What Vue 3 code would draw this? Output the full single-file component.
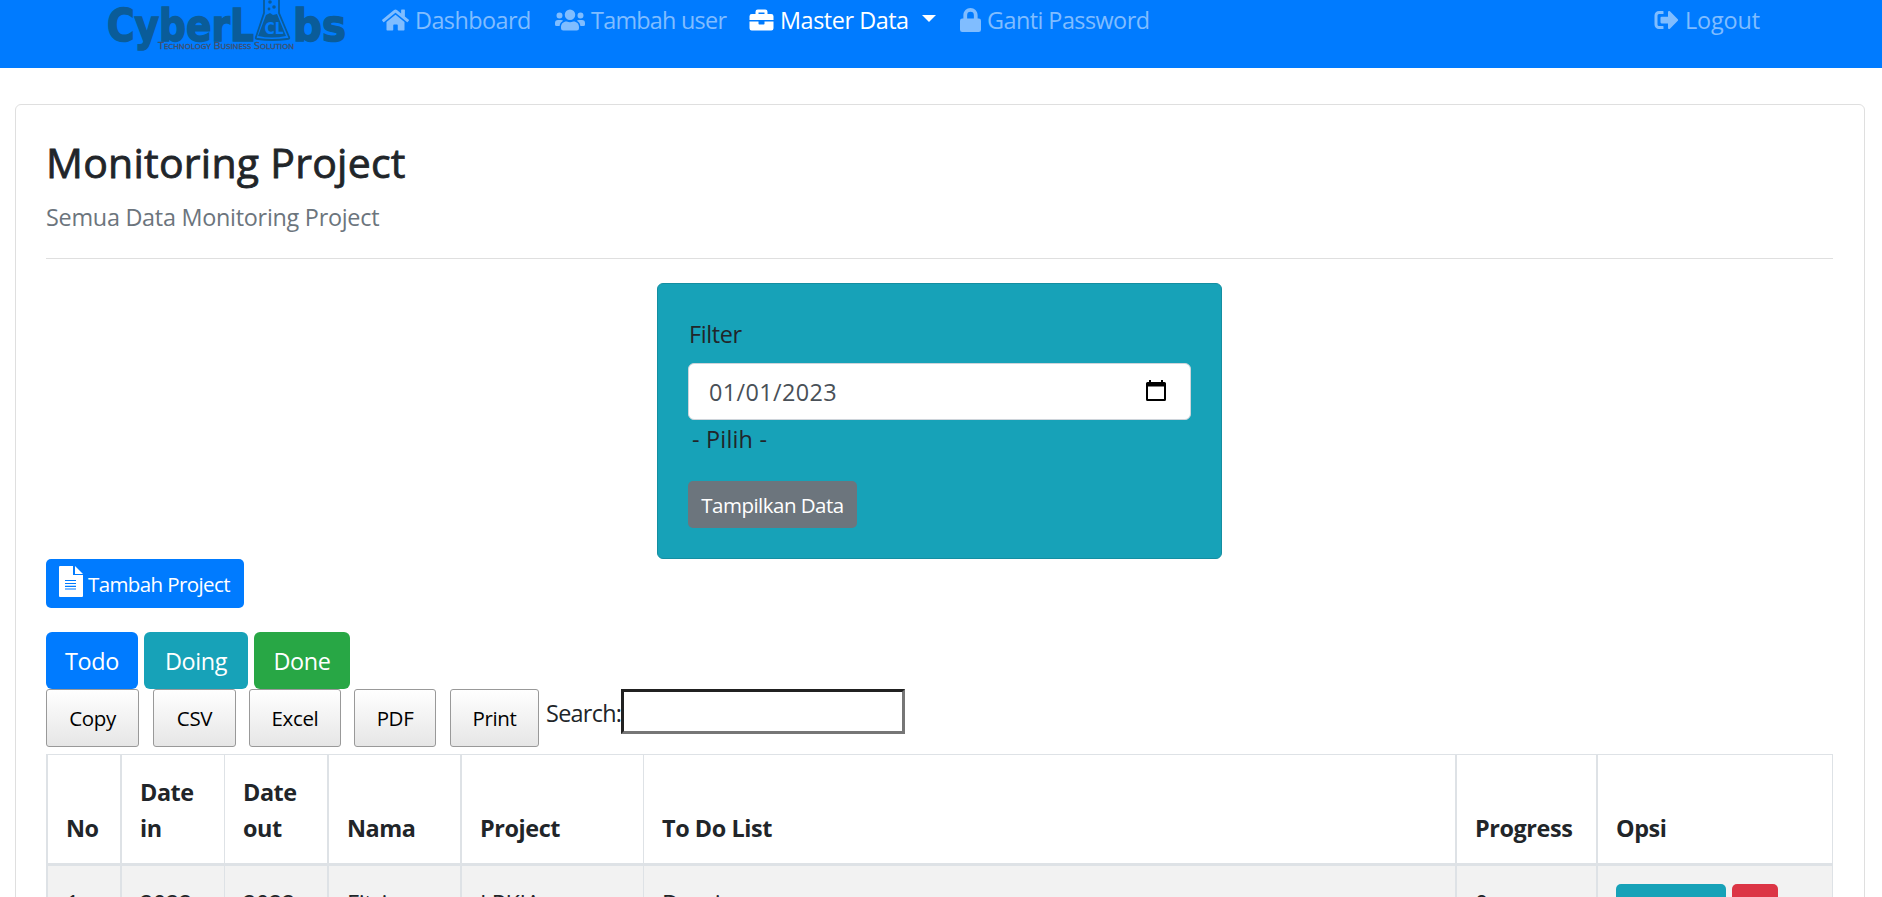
<script setup>
import { ref } from 'vue'

const filterDate = ref('01/01/2023')
const search = ref('')

const exportsList = [
  { label: 'Copy', key: 'copy' },
  { label: 'CSV', key: 'csv' },
  { label: 'Excel', key: 'excel' },
  { label: 'PDF', key: 'pdf' },
  { label: 'Print', key: 'print' },
]

const rows = [
  { no: 1, dateIn: '2022-', dateOut: '2022-', nama: 'Fitri', project: 'LPKIA', todo: 'Desain', progress: '0' },
]
</script>

<template>
  <div class="page">
    <nav class="navbar">
      <a class="brand" aria-label="CyberLabs">
        <svg width="244" height="52" viewBox="0 0 244 52">
          <g class="logo-text">
            <text x="1" y="40.500" textLength="147" lengthAdjust="spacingAndGlyphs">CyberL</text>
            <text x="187" y="40.500" textLength="53" lengthAdjust="spacingAndGlyphs">bs</text>
          </g>
          <path d="M158-2v15L150 37q-1 2 2 2 14 2 29 0 3 0 2-2L173 13V-2" fill="none" stroke="#0a5c99" stroke-width="1.8" />
          <path d="M160 15l4-2 3 2 4-1 9 22q-14 3-28 0z" fill="#0a5c99" />
          <circle cx="163" cy="9" r="1.4" fill="#0a5c99" />
          <circle cx="168" cy="7" r="1.8" fill="#0a5c99" />
          <circle cx="164" cy="2" r="1.8" fill="#0a5c99" />
          <text class="logo-cl" x="158.500" y="33.500" textLength="19" lengthAdjust="spacingAndGlyphs">CL</text>
          <text class="logo-tag" x="52" y="49" textLength="136" lengthAdjust="spacingAndGlyphs">Technology Business Solution</text>
        </svg>
      </a>
      <a class="nav-link dash">
        <svg width="27" height="24" viewBox="0 0 576 512"><path d="M280 148L96 300v164a16 16 0 0 0 16 16h112a16 16 0 0 0 16-16v-96a16 16 0 0 1 16-16h64a16 16 0 0 1 16 16v96a16 16 0 0 0 16 16h112a16 16 0 0 0 16-16V300L296 148a12 12 0 0 0-16 0zM572 251l-84-69V44a12 12 0 0 0-12-12h-56a12 12 0 0 0-12 12v72L318 43a48 48 0 0 0-61 0L4 251a12 12 0 0 0-1 17l25 31a12 12 0 0 0 17 2L280 107a12 12 0 0 1 16 0l235 194a12 12 0 0 0 17-2l26-31a12 12 0 0 0-2-17z" /></svg>
        <span>Dashboard</span>
      </a>
      <a class="nav-link users">
        <svg width="30" height="24" viewBox="0 0 640 512"><path d="M96 224a64 64 0 1 0 0-128 64 64 0 0 0 0 128zm448 0a64 64 0 1 0 0-128 64 64 0 0 0 0 128zm32 32h-64c-18 0-34 7-45 18 40 22 69 62 75 110h66a32 32 0 0 0 32-32v-32a64 64 0 0 0-64-64zm-256 0a112 112 0 1 0 0-224 112 112 0 0 0 0 224zm77 32h-8a155 155 0 0 1-138 0h-8c-64 0-115 51-115 115v29a48 48 0 0 0 48 48h288a48 48 0 0 0 48-48v-29c0-64-51-115-115-115zm-224-14a64 64 0 0 0-45-18H64a64 64 0 0 0-64 64v32a32 32 0 0 0 32 32h66c6-48 35-88 75-110z" /></svg>
        <span>Tambah user</span>
      </a>
      <a class="nav-link master">
        <svg width="25" height="24" viewBox="0 0 512 512"><path d="M320 336a16 16 0 0 1-16 16h-96a16 16 0 0 1-16-16v-48H0v144a48 48 0 0 0 48 48h416a48 48 0 0 0 48-48V288H320zm144-208h-80V80a48 48 0 0 0-48-48H176a48 48 0 0 0-48 48v48H48a48 48 0 0 0-48 48v80h512v-80a48 48 0 0 0-48-48zm-144 0H192V96h128z" /></svg>
        <span>Master Data</span>
        <i class="caret"></i>
      </a>
      <a class="nav-link lock">
        <svg width="21" height="24" viewBox="0 0 448 512"><path d="M400 224h-24v-72C376 68 308 0 224 0S72 68 72 152v72H48a48 48 0 0 0-48 48v192a48 48 0 0 0 48 48h352a48 48 0 0 0 48-48V272a48 48 0 0 0-48-48zm-104 0H152v-72a72 72 0 0 1 144 0z" /></svg>
        <span>Ganti Password</span>
      </a>
      <a class="nav-link logout">
        <svg width="25" height="24" viewBox="0 0 512 512"><path d="M497 273L329 441c-15 15-41 4-41-17v-96H152a24 24 0 0 1-24-24v-96a24 24 0 0 1 24-24h136V88c0-21 26-32 41-17l168 168a24 24 0 0 1 0 34zM192 436v-40a12 12 0 0 0-12-12H96a32 32 0 0 1-32-32V160a32 32 0 0 1 32-32h84a12 12 0 0 0 12-12V76a12 12 0 0 0-12-12H96a96 96 0 0 0-96 96v192a96 96 0 0 0 96 96h84a12 12 0 0 0 12-12z" /></svg>
        <span>Logout</span>
      </a>
    </nav>

    <main class="card">
      <h1>Monitoring Project</h1>
      <p class="subtitle">Semua Data Monitoring Project</p>
      <hr />

      <section class="filter">
        <label>Filter</label>
        <div class="date-field">
          <span>{{ filterDate }}</span>
          <svg width="20" height="21" viewBox="0 0 20 21"><path d="M3 0h2v2h10V0h2v2h1.500q1.500 0 1.500 1.500v16q0 1.500-1.500 1.500h-17Q0 21 0 19.500v-16Q0 2 1.500 2H3zM2 6.500V19h16V6.500z" fill="#000" fill-rule="evenodd" /></svg>
        </div>
        <div class="pilih">- Pilih -</div>
        <button class="btn-show">Tampilkan Data</button>
      </section>

      <button class="btn-add">
        <svg width="24" height="31" viewBox="0 0 24 31"><path d="M1 0h13v9h10v21q0 1-1 1H1q-1 0-1-1V1q0-1 1-1z" fill="#fff" /><path d="M16 0l8 8h-8z" fill="#fff" /><path d="M6 14.500h11M6 17.500h11M6 20.300h11M6 23h11" stroke="#007bff" stroke-width="1.200" /></svg>
        <span>Tambah Project</span>
      </button>

      <div class="status">
        <button class="todo">Todo</button>
        <button class="doing">Doing</button>
        <button class="done">Done</button>
      </div>

      <div class="tools">
        <button v-for="item in exportsList" :key="item.key" :class="['dt-btn', item.key]">{{ item.label }}</button>
        <label class="search"><span>Search:</span><input v-model="search" type="text" /></label>
      </div>

      <table>
        <colgroup>
          <col class="c-no" /><col class="c-in" /><col class="c-out" /><col class="c-nama" />
          <col class="c-project" /><col class="c-todo" /><col class="c-progress" /><col class="c-opsi" />
        </colgroup>
        <thead>
          <tr>
            <th>No</th>
            <th class="thin">Date<br />in</th>
            <th>Date<br />out</th>
            <th>Nama</th>
            <th class="thin">Project</th>
            <th>To Do List</th>
            <th>Progress</th>
            <th class="thin">Opsi</th>
          </tr>
        </thead>
        <tbody>
          <tr v-for="row in rows" :key="row.no">
            <td>{{ row.no }}</td>
            <td class="thin">{{ row.dateIn }}</td>
            <td>{{ row.dateOut }}</td>
            <td>{{ row.nama }}</td>
            <td class="thin">{{ row.project }}</td>
            <td>{{ row.todo }}</td>
            <td>{{ row.progress }}</td>
            <td class="thin">
              <div class="actions"><button class="edit"></button><button class="delete"></button></div>
            </td>
          </tr>
        </tbody>
      </table>
    </main>
  </div>
</template>

<style>
html,
body {
  overflow: hidden;
  background: #fff;
}
</style>

<style scoped>
* {
  box-sizing: border-box;
}

.page {
  height: 897px;
  overflow: hidden;
  font-family: "Open Sans", "Noto Sans", sans-serif;
  font-size: 23.4px;
  line-height: 36px;
  letter-spacing: -0.35px;
  color: #212529;
}

button,
input {
  font: inherit;
  letter-spacing: inherit;
  margin: 0;
}

.navbar {
  display: flex;
  align-items: flex-start;
  height: 68px;
  padding-left: 106px;
  background: #007bff;
}

.brand {
  width: 276px;
  height: 52px;
}

.brand svg {
  display: block;
}

.logo-text {
  font: bold 45px "DejaVu Sans", sans-serif;
  letter-spacing: 0;
  fill: #0a5c99;
  stroke: #0a5c99;
  stroke-width: 1.6;
}

.logo-cl {
  font: bold 15.500px "DejaVu Sans", sans-serif;
  letter-spacing: 0;
  fill: #007bff;
}

.logo-tag {
  font: 9.800px "Open Sans", sans-serif;
  font-variant: small-caps;
  letter-spacing: 0;
  fill: #40506b;
  stroke: #40506b;
  stroke-width: 0.3;
}

.nav-link {
  display: flex;
  align-items: center;
  gap: 6px;
  padding-top: 2px;
  white-space: nowrap;
  color: #80bdff;
}

.nav-link svg {
  flex: none;
  fill: currentColor;
}

.dash {
  width: 173px;
  letter-spacing: -0.55px;
}

.users {
  width: 194px;
  letter-spacing: -0.75px;
}

.master {
  width: 211px;
  color: #fff;
  letter-spacing: -0.45px;
}

.caret {
  margin-left: 7px;
  margin-top: -3px;
  border: 7px solid transparent;
  border-top-color: #fff;
  border-bottom: 0;
}

.lock {
  width: 694px;
  letter-spacing: -0.55px;
}

.logout {
  letter-spacing: -0.15px;
}

.card {
  width: 1850px;
  height: 900px;
  margin: 36px 0 0 15px;
  padding: 32px 31px 0 30px;
  border: 1px solid #dfdfdf;
  border-radius: 6px;
}

h1 {
  margin: 0;
  font-size: 41px;
  font-weight: 500;
  line-height: 50px;
  letter-spacing: 0.25px;
  -webkit-text-stroke: 0.8px currentColor;
}

.subtitle {
  margin: 12px 0 23px;
  color: #6c757d;
  letter-spacing: -0.27px;
}

hr {
  height: 1px;
  margin: 0 0 24px;
  border: 0;
  background: #dfdfdf;
}

.filter {
  width: 565px;
  height: 276px;
  margin-left: 611px;
  padding: 32px 30px 0;
  border: 1px solid #148ea1;
  border-radius: 6px;
  background: #17a2b8;
}

.filter label {
  display: block;
  padding-left: 1px;
}

.date-field {
  display: flex;
  align-items: center;
  justify-content: space-between;
  height: 57px;
  margin-top: 11px;
  padding: 0 24px 0 20px;
  border: 1px solid #ced4da;
  border-radius: 6px;
  background: #fff;
  color: #495057;
}

.date-field span {
  padding-top: 1px;
  letter-spacing: 0.38px;
}

.date-field svg {
  margin-bottom: 3px;
}

.pilih {
  margin-top: 1px;
  padding-left: 4px;
  letter-spacing: 0.2px;
}

.btn-show {
  display: block;
  width: 169px;
  height: 47px;
  margin-top: 24px;
  padding: 0;
  border: 0;
  border-radius: 5px;
  background: #6c757d;
  color: #fff;
  font-size: 20.500px;
  letter-spacing: -0.52px;
}

.btn-add {
  display: flex;
  align-items: flex-start;
  width: 198px;
  height: 49px;
  padding: 7px 0 0 13px;
  border: 0;
  border-radius: 5px;
  background: #007bff;
  color: #fff;
  font-size: 20.500px;
  letter-spacing: -0.6px;
  white-space: nowrap;
}

.btn-add span {
  margin-left: 5px;
}

.status {
  display: flex;
  gap: 6px;
  margin-top: 24px;
}

.status button {
  height: 57px;
  padding: 0;
  border: 0;
  border-radius: 6px;
  color: #fff;
}

.status .todo {
  width: 92px;
  background: #007bff;
}

.status .doing {
  width: 104px;
  background: #17a2b8;
}

.status .done {
  width: 96px;
  background: #28a745;
}

.tools {
  display: flex;
  height: 65px;
}

.dt-btn {
  height: 58px;
  padding: 0;
  border: 1px solid #999;
  border-radius: 3px;
  background: linear-gradient(#fff, #e6e6e6);
  color: #000;
  font-size: 20.500px;
}

.copy {
  width: 93px;
  margin-right: 14px;
}

.csv {
  width: 83px;
  margin-right: 13px;
}

.excel {
  width: 92px;
  margin-right: 13px;
}

.pdf {
  width: 82px;
  margin-right: 14px;
}

.print {
  width: 89px;
}

.search {
  display: flex;
  height: 45px;
  padding-left: 7px;
}

.search span {
  width: 75px;
  padding-top: 6px;
  letter-spacing: -0.7px;
  white-space: nowrap;
}

.search input {
  width: 284px;
  height: 45px;
  border: 3px solid;
  border-color: #212121 #767676 #767676 #212121;
  background: #fff;
  outline: 0;
}

table {
  width: 1787px;
  table-layout: fixed;
  border-spacing: 0;
  border-top: 1px solid #dee2e6;
  border-left: 2px solid #dee2e6;
}

.c-no { width: 74px; }
.c-in { width: 103px; }
.c-out { width: 104px; }
.c-nama { width: 133px; }
.c-project { width: 182px; }
.c-todo { width: 813px; }
.c-progress { width: 141px; }
.c-opsi { width: 235px; }

th,
td {
  padding: 18px 0 0 18px;
  border-right: 2px solid #dee2e6;
  text-align: left;
}

th {
  height: 111px;
  padding-bottom: 17px;
  border-bottom: 3px solid #dee2e6;
  font-weight: 700;
  letter-spacing: -0.42px;
  vertical-align: bottom;
}

td {
  height: 120px;
  padding-top: 19px;
  background: #f2f2f2;
  vertical-align: top;
}

th.thin,
td.thin {
  border-right-width: 1px;
}

.actions {
  display: flex;
  gap: 6px;
  margin-top: -1px;
}

.actions button {
  height: 47px;
  padding: 0;
  border: 0;
  border-radius: 5px;
}

.edit {
  width: 110px;
  background: #17a2b8;
}

.delete {
  width: 46px;
  background: #dc3545;
}
</style>
